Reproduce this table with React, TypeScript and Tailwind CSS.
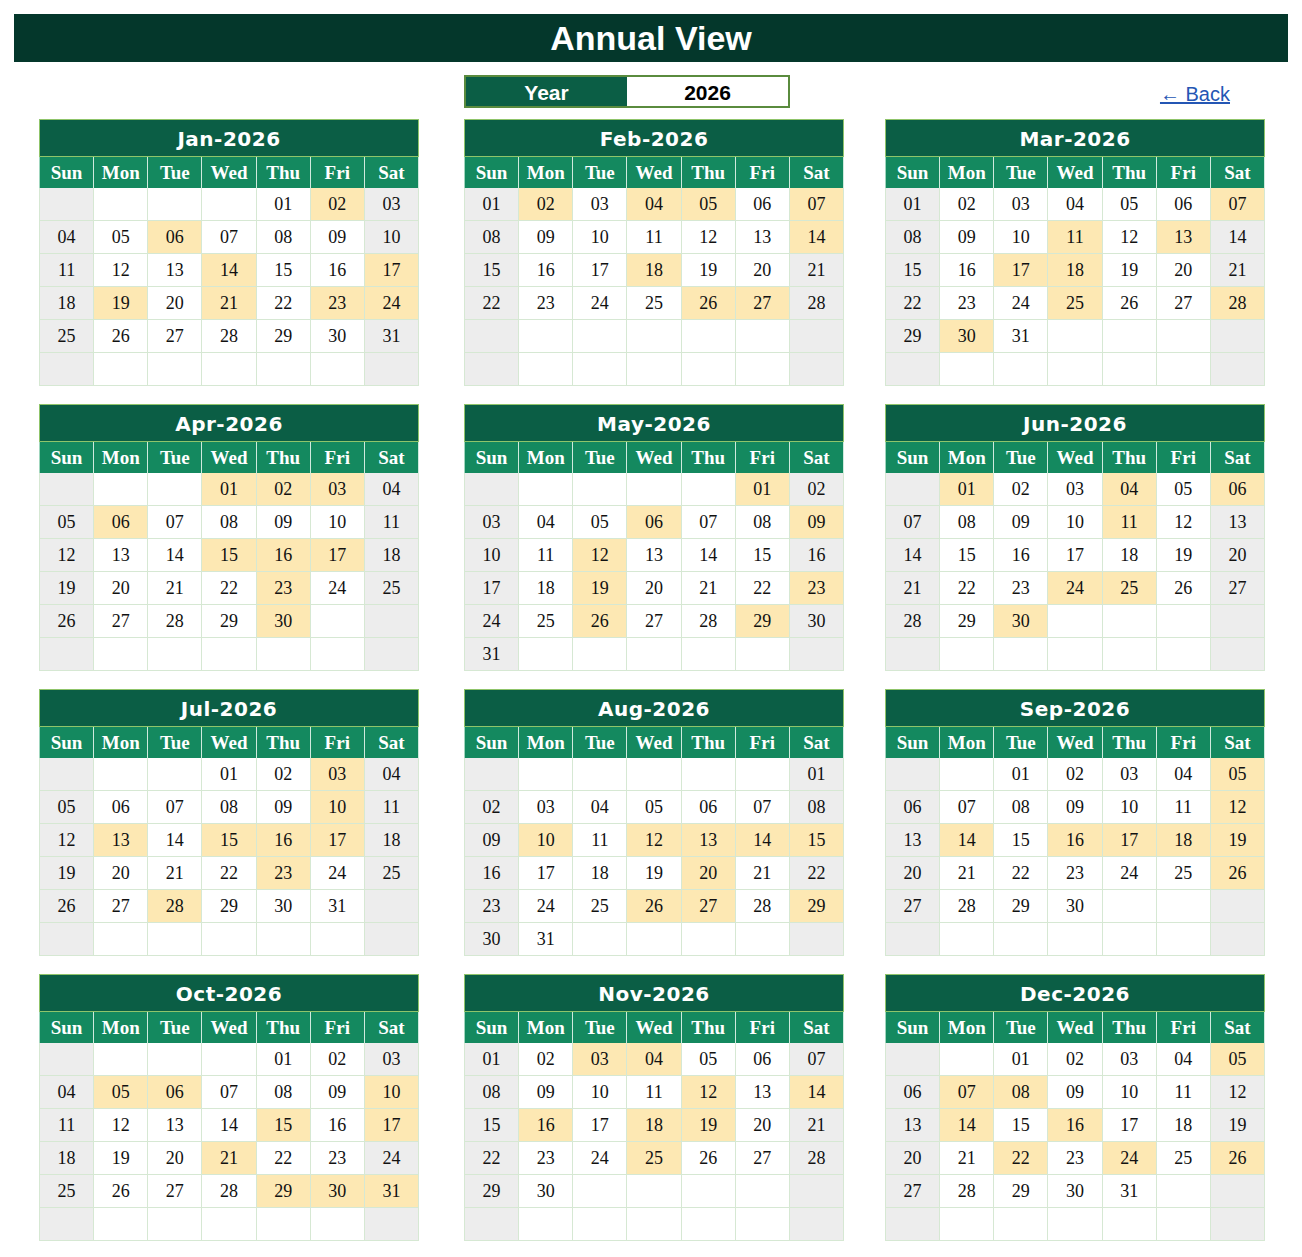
import React from "react";

const YEAR = 2026;
const MONTHS = ["Jan", "Feb", "Mar", "Apr", "May", "Jun", "Jul", "Aug", "Sep", "Oct", "Nov", "Dec"];
const DAYS = ["Sun", "Mon", "Tue", "Wed", "Thu", "Fri", "Sat"];

// highlighted dates per month (index 0 = Jan)
const HIGHLIGHTS: number[][] = [
  [2, 6, 14, 17, 19, 21, 23, 24],
  [2, 4, 5, 7, 14, 18, 26, 27],
  [7, 11, 13, 17, 18, 25, 28, 30],
  [1, 2, 3, 6, 15, 16, 17, 23, 30],
  [1, 6, 9, 12, 19, 23, 26, 29],
  [1, 4, 6, 11, 24, 25, 30],
  [3, 10, 13, 15, 16, 17, 23, 28],
  [10, 12, 13, 14, 15, 20, 26, 27, 29],
  [5, 12, 14, 16, 17, 18, 19, 26],
  [5, 6, 10, 15, 17, 21, 29, 30, 31],
  [3, 4, 12, 14, 16, 18, 19, 25],
  [5, 7, 8, 14, 16, 22, 24, 26],
];

function buildCells(month: number) {
  const first = new Date(YEAR, month, 1).getDay();
  const count = new Date(YEAR, month + 1, 0).getDate();
  const cells: (number | null)[] = [];
  for (let i = 0; i < 42; i++) {
    const d = i - first + 1;
    cells.push(d >= 1 && d <= count ? d : null);
  }
  return cells;
}

function MonthCard({ month }: { month: number }) {
  const cells = buildCells(month);
  const hl = HIGHLIGHTS[month];

  return (
    <div className="w-[380px]">
      <div className="h-[38px] pt-[2px] bg-[#0b5e45] border border-[#8fc46a] flex items-center justify-center text-white text-[20px] font-bold font-['DejaVu_Sans',sans-serif] tracking-[0.5px]">
        {MONTHS[month]}-{YEAR}
      </div>
      <div className="grid grid-cols-7 h-[31px] bg-[#14895f] border-l border-[#9fd6bd]">
        {DAYS.map((d) => (
          <div
            key={d}
            className="flex items-center justify-center pt-[2px] border-r border-[#cfeadd] text-white text-[19px] font-bold font-['Liberation_Serif',serif]"
          >
            {d}
          </div>
        ))}
      </div>
      <div className="grid grid-cols-7 border-l border-[#d6e8d3]">
        {cells.map((d, i) => {
          const col = i % 7;
          const weekend = col === 0 || col === 6;
          const yellow = d !== null && hl.includes(d);
          const bg = yellow ? "bg-[#fde8b3]" : weekend ? "bg-[#ededed]" : "bg-white";
          return (
            <div
              key={i}
              className={`${bg} h-[33px] pt-[1px] flex items-center justify-center border-r border-b border-[#d6e8d3] text-[18px] text-[#111] font-['Liberation_Serif',serif]`}
            >
              {d !== null ? String(d).padStart(2, "0") : ""}
            </div>
          );
        })}
      </div>
    </div>
  );
}

export default function App() {
  return (
    <div className="w-[1302px] min-h-[1257px] bg-white pt-[14px] font-['Liberation_Sans',Arial,sans-serif]">
      {/* Page header */}
      <div className="mx-[14px] h-[48px] bg-[#04372b] flex items-center justify-center">
        <h1 className="text-white text-[34px] font-bold">Annual View</h1>
      </div>

      {/* Year selector + back link */}
      <div className="pl-[39px] mt-[13px] grid grid-cols-[425px_421px_380px] h-[33px]">
        <div />
        <div className="w-[326px] h-[33px] flex border-2 border-[#5a8b3e]">
          <div className="w-1/2 pt-[2px] bg-[#0b5e45] flex items-center justify-center text-white text-[21px] font-bold">
            Year
          </div>
          <div className="w-1/2 pt-[2px] bg-white flex items-center justify-center text-black text-[21px] font-bold">
            {YEAR}
          </div>
        </div>
        <div className="flex items-center justify-end pr-[35px] pt-[4px]">
          <a href="#" className="text-[#2456b4] text-[20px] underline">
            ← Back
          </a>
        </div>
      </div>

      {/* Months */}
      <div className="pl-[39px] mt-[11px] grid grid-cols-[425px_421px_380px] gap-y-[18px]">
        {MONTHS.map((_, m) => (
          <MonthCard key={m} month={m} />
        ))}
      </div>
    </div>
  );
}
